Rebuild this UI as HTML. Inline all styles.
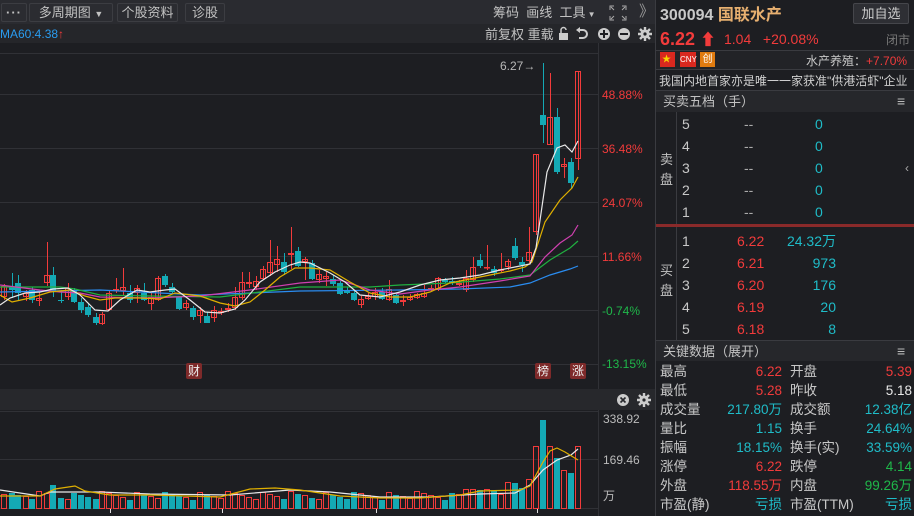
<!DOCTYPE html>
<html><head><meta charset="utf-8"><style>
*{margin:0;padding:0;box-sizing:border-box}
body{width:914px;height:516px;overflow:hidden;background:#1d1e22;font-family:"Liberation Sans","Noto Sans CJK SC",sans-serif;color:#c8c8c8;position:relative;font-size:13px}
.a{position:absolute;white-space:nowrap;line-height:16px}
.btn{position:absolute;top:3px;height:19px;border:1px solid #3c3d42;background:#2b2c31;color:#c2c2c2;font-size:13px;line-height:17px;text-align:center;border-radius:2px}
.r{color:#f23b3b}.g{color:#1fb84a}.c{color:#1fbcc8}.w{color:#e8e8e8}
.rt{text-align:right}
</style></head><body>
<div class="a" style="left:0;top:0;width:656px;height:24px;background:#2a2b30"></div>
<div class="a" style="left:0;top:24px;width:656px;height:19px;background:#25262a"></div>
<div class="btn" style="left:1px;width:26px;font-weight:bold;letter-spacing:1px">···</div>
<div class="btn" style="left:29px;width:84px">多周期图 <span style="font-size:9px">▼</span></div>
<div class="btn" style="left:117px;width:61px">个股资料</div>
<div class="btn" style="left:185px;width:40px">诊股</div>
<div class="a" style="left:493px;top:5px;font-size:13px;color:#c2c2c2">筹码&nbsp; 画线&nbsp; 工具<span style="font-size:8px"> ▼</span></div>
<svg class="a" style="left:609px;top:5px" width="18" height="16" fill="none" stroke="#aaa" stroke-width="1"><path d="M1 5V1h4M13 1h4v4M17 11v4h-4M5 15H1v-4M2 2l3 3M16 2l-3 3M16 14l-3-3M2 14l3-3"/></svg>
<div class="a" style="left:639px;top:4px;font-size:15px;color:#999">》</div>
<div class="a" style="left:0;top:26px;font-size:12px;color:#2a9cf0">MA60:4.38<span class="r">↑</span></div>
<div class="a" style="left:485px;top:27px;font-size:13px;color:#c2c2c2">前复权 重载</div>
<svg class="a" style="left:556px;top:26px" width="100" height="16"><g fill="#ccc"><rect x="3" y="7" width="9" height="7"/><path d="M5 7V4a2.5 2.5 0 0 1 5 0" stroke="#ccc" stroke-width="1.5" fill="none"/><path d="M22 4h5a4 4 0 0 1 0 8h-4" stroke="#ccc" stroke-width="2" fill="none"/><path d="M20 4l4-3v6z"/><circle cx="48" cy="8" r="6"/><circle cx="68" cy="8" r="6"/><circle cx="89" cy="8" r="4.5"/><path d="M89 1v14M82 8h14M84 3l10 10M94 3L84 13" stroke="#ccc" stroke-width="2.4"/></g><path d="M44 8h8M48 4v8M64 8h8" stroke="#1d1e22" stroke-width="2"/><circle cx="89" cy="8" r="1.6" fill="#1d1e22"/></svg>
<svg class="a" style="left:0;top:0" width="656" height="516" id="ch"></svg>
<div class="a r" style="left:602px;top:87px;font-size:12px">48.88%</div>
<div class="a r" style="left:602px;top:141px;font-size:12px">36.48%</div>
<div class="a r" style="left:602px;top:195px;font-size:12px">24.07%</div>
<div class="a r" style="left:602px;top:249px;font-size:12px">11.66%</div>
<div class="a g" style="left:602px;top:303px;font-size:12px">-0.74%</div>
<div class="a g" style="left:602px;top:356px;font-size:12px">-13.15%</div>
<div class="a" style="left:500px;top:58px;font-size:12px;color:#b8b8b8">6.27→</div>
<div class="a" style="left:186px;top:363px;width:16px;height:16px;background:#7e2a2a;color:#eee;font-size:12px;line-height:16px;text-align:center;border-radius:2px">财</div>
<div class="a" style="left:535px;top:363px;width:16px;height:16px;background:#7e2a2a;color:#eee;font-size:12px;line-height:16px;text-align:center;border-radius:2px">榜</div>
<div class="a" style="left:570px;top:363px;width:16px;height:16px;background:#7e2a2a;color:#eee;font-size:12px;line-height:16px;text-align:center;border-radius:2px">涨</div>
<div class="a" style="left:0;top:389px;width:656px;height:21px;background:#27282c"></div>
<svg class="a" style="left:615px;top:392px" width="40" height="16"><circle cx="8" cy="8" r="6" fill="#ccc"/><path d="M5.5 5.5l5 5M10.5 5.5l-5 5" stroke="#27282c" stroke-width="1.6"/><circle cx="29" cy="8" r="4.5" fill="#ccc"/><path d="M29 1v14M22 8h14M24 3l10 10M34 3L24 13" stroke="#ccc" stroke-width="2.4"/><circle cx="29" cy="8" r="1.6" fill="#27282c"/></svg>
<div class="a" style="left:603px;top:411px;font-size:12px;color:#bbb">338.92</div>
<div class="a" style="left:603px;top:452px;font-size:12px;color:#bbb">169.46</div>
<div class="a" style="left:603px;top:488px;font-size:12px;color:#bbb">万</div>

<!-- right panel -->
<div class="a" style="left:655px;top:0;width:1px;height:516px;background:#3a3b40"></div>
<div class="a" style="left:660px;top:6px;font-size:16px;line-height:20px;font-weight:bold;color:#c8c8c8">300094 <span style="color:#e8b070">国联水产</span></div>
<div class="a" style="left:853px;top:3px;width:56px;height:21px;border:1px solid #45464b;background:#2e2f34;border-radius:2px;font-size:13px;line-height:19px;text-align:center;color:#ccc">加自选</div>
<div class="a r" style="left:660px;top:28px;font-size:18px;line-height:22px;font-weight:bold">6.22 <span style="font-size:16px">⬆</span></div>
<div class="a r" style="left:724px;top:30px;font-size:14px;line-height:18px">1.04&nbsp;&nbsp; +20.08%</div>
<div class="a" style="left:886px;top:32px;font-size:12px;color:#777">闭市</div>
<div class="a" style="left:656px;top:50px;width:258px;height:20px;background:#222327;border-top:1px solid #3a3b40;border-bottom:1px solid #3a3b40"></div>
<div class="a" style="left:660px;top:52px;width:15px;height:15px;background:#d9281f;color:#f7d400;font-size:9px;line-height:15px;padding-left:2px">★</div>
<div class="a" style="left:680px;top:52px;width:16px;height:15px;background:#d9281f;color:#fff;font-size:8px;line-height:15px;text-align:center">CNY</div>
<div class="a" style="left:700px;top:52px;width:15px;height:15px;background:#e07b10;color:#fff;font-size:10px;line-height:15px;text-align:center">创</div>
<div class="a" style="left:806px;top:53px;font-size:12px;color:#c8c8c8">水产养殖：<span class="r">+7.70%</span></div>
<div class="a" style="left:659px;top:73px;font-size:12px;color:#d0d0d0">我国内地首家亦是唯一一家获准"供港活虾"企业</div>
<div class="a" style="left:656px;top:90px;width:258px;height:22px;background:#26272b;border-top:1px solid #3a3b40"></div>
<div class="a" style="left:663px;top:94px;font-size:13px;color:#c2c2c2">买卖五档（手）</div>
<div class="a" style="left:897px;top:93px;font-size:14px;color:#bbb">≡</div>
<div class="a" style="left:676px;top:112px;width:1px;height:228px;background:#3a3b40"></div>
<div class="a" style="left:656px;top:224px;width:258px;height:3px;background:#8a2a2a"></div>
<div class="a" style="left:660px;top:150px;font-size:13px;line-height:20px;width:14px;color:#c2c2c2;white-space:normal">卖<br>盘</div>
<div class="a" style="left:660px;top:261px;font-size:13px;line-height:20px;width:14px;color:#c2c2c2;white-space:normal">买<br>盘</div>
<div class="a" style="left:905px;top:160px;font-size:12px;color:#aaa">‹</div>
<div id="ob"></div>
<div class="a" style="left:656px;top:340px;width:258px;height:21px;background:#26272b;border-top:1px solid #3a3b40"></div>
<div class="a" style="left:663px;top:344px;font-size:13px;color:#c2c2c2">关键数据（展开）</div>
<div class="a" style="left:897px;top:343px;font-size:14px;color:#bbb">≡</div>
<div id="kd"></div>
<script>
var s='';
function L(x1,y1,x2,y2,c,w){s+='<line x1="'+x1+'" y1="'+y1+'" x2="'+x2+'" y2="'+y2+'" stroke="'+c+'" stroke-width="'+(w||1)+'"/>';}
L(0,53.5,598,53.5,'#303136');L(598.5,43,598.5,389,'#303136');
[94,148,202,256,310,364].forEach(function(y){L(0,y+.5,598,y+.5,'#303136')});
L(0,411.5,598,411.5,'#303136');L(0,459.5,598,459.5,'#303136');L(0,508.5,598,508.5,'#303136');L(598.5,410,598.5,516,'#303136');
[110,222,376,537].forEach(function(x){L(x+.5,509,x+.5,513,'#ddd')});
var C=[[4,286,297,284,300,1],[12,287,290,273,298,0],[18,283,293,275,300,0],[26,293,297,290,301,1],[32,290,300,287,303,0],[39,298,301,290,306,1],[47,275,283,242,286,1],[53,275,291,267,297,0],[61,300,301,290,303,0],[68,288,297,283,300,1],[74,291,302,288,303,0],[81,302,310,298,313,0],[88,307,315,303,317,0],[96,317,323,313,325,0],[102,314,324,312,325,1],[109,293,310,290,311,1],[116,289,290,278,293,1],[123,287,291,268,296,1],[130,293,300,285,303,0],[137,288,293,285,303,1],[144,293,300,283,301,0],[151,297,304,293,310,1],[158,278,300,276,301,1],[165,276,285,274,287,0],[172,287,292,283,293,0],[179,297,309,296,310,0],[186,303,308,300,310,1],[193,308,317,306,320,0],[200,310,316,307,323,1],[207,316,323,312,323,0],[214,310,318,306,322,1],[221,311,313,308,315,1],[228,308,310,303,312,1],[235,297,308,287,310,1],[242,282,298,272,300,1],[249,282,284,272,288,1],[256,281,287,276,290,1],[263,269,279,266,280,1],[270,262,273,240,276,1],[277,259,265,246,272,1],[284,262,272,253,275,0],[291,253,255,227,269,1],[298,251,266,247,267,0],[305,259,262,257,280,1],[312,263,279,260,280,0],[319,274,280,270,283,1],[326,276,279,272,286,1],[333,279,284,275,286,0],[340,283,294,281,295,0],[347,290,293,287,294,0],[354,293,300,291,301,0],[361,299,305,296,308,1],[368,296,299,293,300,1],[375,292,297,288,300,1],[382,292,299,288,300,0],[389,289,300,280,301,1],[396,295,303,293,304,0],[403,300,302,295,306,1],[410,297,300,294,301,1],[417,294,298,293,299,1],[424,293,297,285,298,1],[431,288,290,285,291,1],[438,278,289,277,291,1],[445,280,282,278,283,0],[452,281,283,277,285,0],[459,283,285,280,286,1],[466,278,290,270,292,1],[473,267,280,257,282,1],[480,260,266,254,268,0],[487,267,268,245,270,1],[494,269,273,266,276,0],[501,269,271,253,272,1],[508,261,267,259,270,1],[515,246,258,238,260,0],[522,262,265,257,272,0],[529,252,261,227,263,1],[536,154,232,154,235,1],[543,115,125,63,143,0],[550,117,145,73,145,1],[557,117,172,108,174,0],[564,164,167,158,178,1],[571,162,183,158,188,0],[578,71,159,71,170,1]];
var VH={46:35,53:24,236:26,243:27,250:25,257:25,290:25,110:14,12:16,4:14,466:19,473:19,480:19,487:19,494:18,501:14,508:26,515:26,522:21,529:29,536:62,543:89,550:62,557:51,564:38,571:36,578:62};
C.forEach(function(k,i){var x=k[0],col=k[5]?'#f23b3b':'#14a9b5';
L(x+.5,k[3],x+.5,k[4],col);
var h=Math.max(k[2]-k[1],1);
if(k[5])s+='<rect x="'+(x-2.5)+'" y="'+(k[1]+.5)+'" width="5" height="'+(h-1||0.5)+'" fill="none" stroke="'+col+'"/>';
else s+='<rect x="'+(x-3)+'" y="'+k[1]+'" width="6" height="'+h+'" fill="'+col+'"/>';
var vh=VH[x]||(9+((i*7)%9));
if(k[5])s+='<rect x="'+(x-2.5)+'" y="'+(508.5-vh)+'" width="5" height="'+vh+'" fill="none" stroke="'+col+'"/>';
else s+='<rect x="'+(x-3)+'" y="'+(509-vh)+'" width="6" height="'+vh+'" fill="'+col+'"/>';
});
function P(pts,c){s+='<polyline fill="none" stroke="'+c+'" stroke-width="1.2" points="'+pts+'"/>';}
P('0,292 100,290 200,295 300,291 400,290 460,289 510,287 530,283 550,275 570,269 578,266','#2a8cf0');
P('0,287 60,287 75,289 100,295 150,296 220,297 300,287 340,287 370,287 400,285 450,283 500,279 530,275 550,260 570,248 578,241','#20b040');
P('0,285 40,290 60,292 80,293 100,297 150,298 200,296 250,290 300,283 340,280 370,290 400,294 430,290 460,287 500,281 530,276 545,257 560,243 572,235 578,225','#d040b0');
P('0,295 12,302 30,298 50,292 70,290 85,296 100,300 115,298 140,298 160,299 175,293 200,296 220,303 235,306 250,302 265,290 280,277 295,268 310,268 330,270 350,282 370,293 390,297 410,297 430,292 450,283 470,279 490,275 510,271 525,267 532,262 545,222 560,200 572,188 578,177','#e0b000');
P('0,305 10,298 25,293 40,292 53,289 68,288 80,295 95,310 108,311 120,300 137,290 150,292 165,290 175,289 190,300 205,312 220,313 235,309 245,300 260,282 275,272 290,265 300,262 310,263 330,273 345,282 360,295 380,297 400,292 420,285 440,280 460,278 480,275 500,270 520,266 530,264 536,248 547,172 557,148 565,145 572,152 578,141','#e8e8e8');
P('0,490 40,496 50,492 100,492 150,494 230,495 290,490 330,492 380,497 430,497 480,494 515,493 530,485 543,470 557,460 571,455 578,449','#e8e8e8');
P('0,496 40,496 55,489 75,486 85,491 110,495 150,495 220,497 250,489 275,488 300,490 340,496 380,498 420,498 460,495 480,491 520,490 530,486 543,462 550,451 557,448 565,452 578,460','#e0b000');
document.getElementById('ch').innerHTML=s;
var o='';
var sy=[124,146,168,190,212],by=[241,263,285,307,329];
[5,4,3,2,1].forEach(function(n,i){o+='<div class="a" style="left:682px;top:'+(sy[i]-8)+'px;font-size:14px">'+n+'</div><div class="a" style="left:744px;top:'+(sy[i]-8)+'px;font-size:14px;color:#aaa">--</div><div class="a c" style="left:815px;top:'+(sy[i]-8)+'px;font-size:14px">0</div>';});
var bp=['6.22','6.21','6.20','6.19','6.18'],bv=['24.32万','973','176','20','8'];
[1,2,3,4,5].forEach(function(n,i){o+='<div class="a" style="left:682px;top:'+(by[i]-8)+'px;font-size:14px">'+n+'</div><div class="a r" style="left:737px;top:'+(by[i]-8)+'px;font-size:14px">'+bp[i]+'</div><div class="a c rt" style="left:770px;width:66px;top:'+(by[i]-8)+'px;font-size:14px">'+bv[i]+'</div>';});
document.getElementById('ob').innerHTML=o;
var K=[['最高','6.22','r','开盘','5.39','r'],['最低','5.28','r','昨收','5.18','w'],['成交量','217.80万','c','成交额','12.38亿','c'],['量比','1.15','c','换手','24.64%','c'],['振幅','18.15%','c','换手(实)','33.59%','c'],['涨停','6.22','r','跌停','4.14','g'],['外盘','118.55万','r','内盘','99.26万','g'],['市盈(静)','亏损','c','市盈(TTM)','亏损','c']];
var q='';K.forEach(function(k,i){var y=364+i*19;
q+='<div class="a" style="left:660px;top:'+y+'px;font-size:13.5px;color:#c8c8c8">'+k[0]+'</div><div class="a rt '+k[2]+'" style="left:700px;width:82px;top:'+y+'px;font-size:13.5px">'+k[1]+'</div><div class="a" style="left:790px;top:'+y+'px;font-size:13.5px;color:#c8c8c8">'+k[3]+'</div><div class="a rt '+k[5]+'" style="left:830px;width:82px;top:'+y+'px;font-size:13.5px">'+k[4]+'</div>';});
document.getElementById('kd').innerHTML=q;
</script>
</body></html>
